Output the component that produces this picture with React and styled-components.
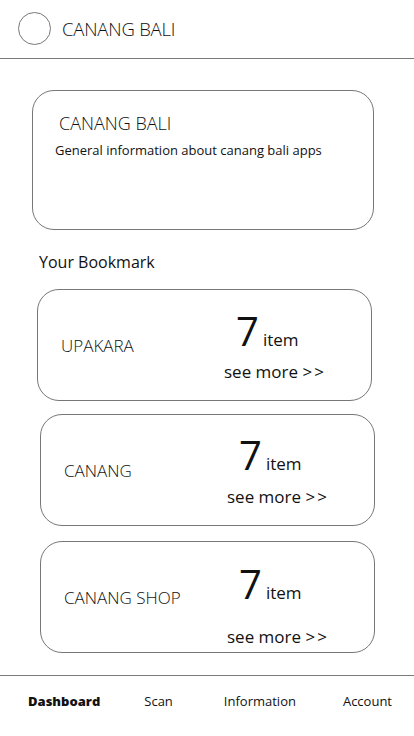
import React from "react";
import styled, { createGlobalStyle } from "styled-components";

const Global = createGlobalStyle`
  html, body { margin: 0; padding: 0; background: #fff; }
  body { font-family: "Open Sans", "Noto Sans", sans-serif; color: #111; }
  * { box-sizing: border-box; }
`;

const Page = styled.div`
  width: 414px;
  height: 736px;
  display: flex;
  flex-direction: column;
  overflow: hidden;
`;

const Header = styled.header`
  height: 59px;
  border-bottom: 1px solid #7a7a7a;
  display: flex;
  align-items: center;
  gap: 11px;
  padding: 0 0 2px 18px;
  flex-shrink: 0;
`;

const Avatar = styled.div`
  width: 33px;
  height: 33px;
  border-radius: 50%;
  border: 1px solid #777;
`;

const HeaderTitle = styled.h1`
  margin: 0;
  font-size: 18.5px;
  font-weight: 300;
  letter-spacing: -0.2px;
`;

const Main = styled.main`
  flex: 1;
  display: flex;
  flex-direction: column;
`;

const InfoCard = styled.section`
  margin: 31px 0 0 32px;
  width: 342px;
  height: 140px;
  border: 1px solid #777;
  border-radius: 22px;
  padding: 19px 0 0 22px;
`;

const InfoTitle = styled.h2`
  margin: 0 0 0 4px;
  font-size: 18px;
  font-weight: 300;
  line-height: 26px;
`;

const InfoText = styled.p`
  margin: 5px 0 0;
  font-size: 13px;
  font-weight: 400;
  line-height: 18px;
`;

const SectionTitle = styled.h3`
  margin: 20px 0 0 39px;
  font-size: 16px;
  font-weight: 400;
  line-height: 24px;
`;

const BookmarkCard = styled.article`
  margin-top: ${(p) => p.$top}px;
  margin-left: ${(p) => p.$left}px;
  width: 335px;
  height: 112px;
  border: 1px solid #777;
  border-radius: 22px;
  display: grid;
  grid-template-columns: 186px 1fr;
`;

const Label = styled.div`
  align-self: center;
  padding: 0 0 0 23px;
  font-size: 17px;
  font-weight: 300;
`;

const Stats = styled.div`
  display: flex;
  flex-direction: column;
  padding-top: ${(p) => p.$pad}px;
`;

const CountRow = styled.div`
  display: flex;
  align-items: baseline;
  gap: 4px;
  margin-left: 12px;
`;

const Count = styled.span`
  font-size: 40px;
  font-weight: 400;
  line-height: 44px;
`;

const Unit = styled.span`
  font-size: 17px;
  font-weight: 400;
`;

const SeeMore = styled.a`
  margin-top: ${(p) => p.$gap}px;
  font-size: 17px;
  font-weight: 400;
  color: #111;
  text-decoration: none;
  line-height: 22px;
`;

const Arrows = styled.span`
  letter-spacing: 2px;
`;

const Footer = styled.nav`
  height: 61px;
  border-top: 1px solid #7a7a7a;
  display: flex;
  align-items: center;
  padding-bottom: 10px;
  flex-shrink: 0;
`;

const NavItem = styled.span`
  font-size: 13px;
  font-weight: ${(p) => (p.$active ? 800 : 400)};
  margin-left: ${(p) => p.$left}px;
`;

const bookmarks = [
  { name: "UPAKARA", top: 15, left: 37, pad: 19, gap: 8 },
  { name: "CANANG", top: 13, left: 40, pad: 18, gap: 9 },
  { name: "CANANG SHOP", top: 15, left: 40, pad: 20, gap: 20 },
];

const nav = [
  { label: "Dashboard", left: 28, active: true },
  { label: "Scan", left: 44 },
  { label: "Information", left: 51 },
  { label: "Account", left: 47 },
];

export default function App() {
  return (
    <Page>
      <Global />
      <Header>
        <Avatar />
        <HeaderTitle>CANANG BALI</HeaderTitle>
      </Header>
      <Main>
        <InfoCard>
          <InfoTitle>CANANG BALI</InfoTitle>
          <InfoText>General information about canang bali apps</InfoText>
        </InfoCard>
        <SectionTitle>Your Bookmark</SectionTitle>
        {bookmarks.map((b) => (
          <BookmarkCard key={b.name} $top={b.top} $left={b.left}>
            <Label>{b.name}</Label>
            <Stats $pad={b.pad}>
              <CountRow>
                <Count>7</Count>
                <Unit>item</Unit>
              </CountRow>
              <SeeMore href="#" $gap={b.gap}>
                see more <Arrows>&gt;&gt;</Arrows>
              </SeeMore>
            </Stats>
          </BookmarkCard>
        ))}
      </Main>
      <Footer>
        {nav.map((n) => (
          <NavItem key={n.label} $left={n.left} $active={n.active}>
            {n.label}
          </NavItem>
        ))}
      </Footer>
    </Page>
  );
}
